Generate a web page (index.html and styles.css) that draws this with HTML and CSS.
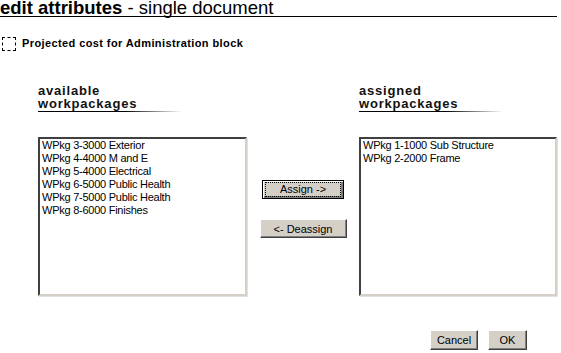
FILE: index.html
```html
<!DOCTYPE html>
<html>
<head>
<title>edit attributes</title>
<link rel="stylesheet" href="styles.css">
</head>
<body>

<div class="title"><b>edit attributes</b> - single document</div>

<label class="check"><span class="check-box"></span>Projected cost for Administration block</label>

<div class="panes">
  <div class="pane pane-left">
    <div class="pane-head">available<br><span class="pane-line">workpackages</span></div>
    <ul class="listbox">
      <li>WPkg 3-3000 Exterior</li>
      <li>WPkg 4-4000 M and E</li>
      <li>WPkg 5-4000 Electrical</li>
      <li>WPkg 6-5000 Public Health</li>
      <li>WPkg 7-5000 Public Health</li>
      <li>WPkg 8-6000 Finishes</li>
    </ul>
  </div>

  <div class="moves">
    <button class="btn btn-default btn-assign"><span>Assign -&gt;</span></button>
    <button class="btn btn-deassign">&lt;- Deassign</button>
  </div>

  <div class="pane pane-right">
    <div class="pane-head">assigned<br><span class="pane-line">workpackages</span></div>
    <ul class="listbox">
      <li>WPkg 1-1000 Sub Structure</li>
      <li>WPkg 2-2000 Frame</li>
    </ul>
  </div>
</div>

<div class="actions">
  <button class="btn btn-cancel">Cancel</button>
  <button class="btn btn-ok">OK</button>
</div>

</body>
</html>
```

FILE: styles.css
```css
/* styles.css */

body {
  margin: 0;
  background: #fff;
  color: #000;
  font-family: "Liberation Sans", Arial, sans-serif;
}

.title {
  width: 557px;
  height: 16px;
  border-bottom: 1px solid #000;
  font-size: 18.5px;
  line-height: 16px;
  white-space: nowrap;
}

.check {
  display: flex;
  align-items: center;
  margin-top: 19px;
  font-size: 11px;
  font-weight: bold;
  letter-spacing: 0.4px;
  line-height: 15px;
}
.check-box {
  width: 12px;
  height: 12px;
  margin-left: 2px;
  margin-right: 6px;
  border: 1px dashed #000;
}

.panes {
  display: flex;
  margin-top: 33px;
  padding-left: 38px;
}

.pane-left { width: 209px; }
.pane-right { width: 198px; }

.pane-head {
  height: 53px;
  font-size: 13px;
  font-weight: bold;
  line-height: 13px;
  letter-spacing: 0.8px;
  color: #111;
}
.pane-line {
  display: inline-block;
  width: 144px;
  padding-bottom: 2px;
  background: linear-gradient(to right, #000 60%, rgba(0,0,0,0)) left bottom / 100% 1px no-repeat;
}

.listbox {
  list-style: none;
  margin: 0;
  padding: 0 2px;
  height: 155px;
  border: 2px solid;
  border-color: #404040 #d4d0c8 #d4d0c8 #404040;
  box-shadow: 1px 1px 0 #e4e2dc;
  font-size: 11px;
  letter-spacing: -0.25px;
  line-height: 13px;
}

.moves {
  width: 112px;
  display: flex;
  flex-direction: column;
  align-items: center;
  padding-top: 96px;
  gap: 20px;
}

.btn {
  height: 19px;
  padding: 0;
  background: #d4d0c8;
  border: 1px solid;
  border-color: #fff #404040 #404040 #fff;
  box-shadow: inset -1px -1px 0 #808080;
  font-family: "Liberation Sans", Arial, sans-serif;
  font-size: 11px;
  color: #000;
}
.btn-default {
  border: 1px solid #000;
  box-shadow: inset 1px 1px 0 #fff, inset -2px -2px 0 #808080;
}
.btn-default span {
  display: block;
  margin: 1px 2px;
  border: 1px dotted #000;
  line-height: 13px;
}
.btn-assign { width: 82px; }
.btn-deassign { width: 87px; }

.actions {
  width: 527px;
  display: flex;
  justify-content: flex-end;
  gap: 10px;
  margin-top: 34px;
}
.btn-cancel { width: 48px; height: 20px; }
.btn-ok { width: 39px; height: 20px; }
```
